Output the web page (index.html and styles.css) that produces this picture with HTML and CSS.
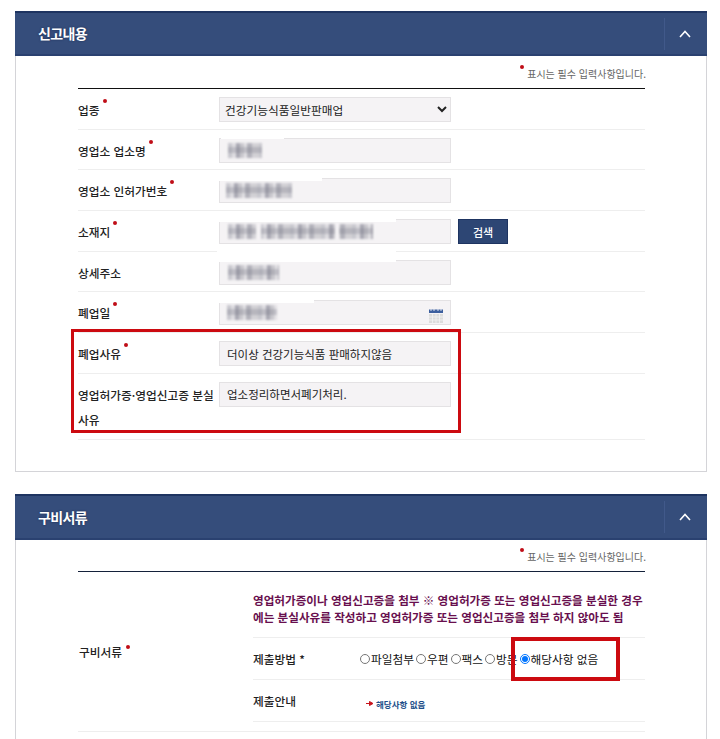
FILE: index.html
```html
<!DOCTYPE html>
<html lang="ko">
<head>
  <meta charset="UTF-8">
  <meta name="viewport" content="width=device-width, initial-scale=1.0">
  <title>폐업신고</title>
  <link rel="stylesheet" href="styles.css">
</head>
<body>
  <div class="page">
    <!-- 신고내용 -->
    <section class="panel">
      <div class="panel-head">
        <h2>신고내용</h2>
        <button class="toggle" type="button" aria-label="접기">
          <svg width="12" height="8" viewBox="0 0 12 8"><path d="M1 7l5-5.500L11 7" fill="none" stroke="#fff" stroke-width="1.6"/></svg>
        </button>
      </div>
      <div class="panel-body">
        <p class="note"><i class="req"></i>표시는 필수 입력사항입니다.</p>
        <div class="rows">
          <div class="row">
            <label class="row-label">업종<i class="req"></i></label>
            <select class="field">
              <option>건강기능식품일반판매업</option>
            </select>
          </div>
          <div class="row">
            <label class="row-label">영업소 업소명<i class="req"></i></label>
            <div class="field"><span class="smear smear-name"></span><span class="blur blur-name"></span></div>
          </div>
          <div class="row">
            <label class="row-label">영업소 인허가번호<i class="req"></i></label>
            <div class="field"><span class="smear smear-no"></span><span class="blur blur-no"></span></div>
          </div>
          <div class="row">
            <label class="row-label">소재지<i class="req"></i></label>
            <div class="field"><span class="smear smear-addr"></span><span class="blur blur-addr"></span></div>
            <button class="search" type="button">검색</button>
          </div>
          <div class="row">
            <label class="row-label">상세주소</label>
            <div class="field"><span class="smear smear-detail"></span><span class="blur blur-detail"></span></div>
          </div>
          <div class="row">
            <label class="row-label">폐업일<i class="req"></i></label>
            <div class="field field-date">
              <span class="smear smear-date"></span>
              <span class="blur blur-date"></span>
              <svg class="cal" width="14" height="15" viewBox="0 0 14 15">
                <rect y="1.500" width="14" height="3.500" fill="#3d5f9e"/>
                <path d="M2 1v2M5 1v2M9 1v2M12 1v2" stroke="#dfe5f0" stroke-width="1"/>
                <rect y="6" width="14" height="9" fill="#dcdcdc"/>
                <path d="M0 9h14M0 12h14M3.500 6v9M7 6v9M10.500 6v9" stroke="#f2f2f2" stroke-width=".8"/>
              </svg>
            </div>
          </div>
          <div class="row">
            <label class="row-label">폐업사유<i class="req"></i></label>
            <input class="field" type="text" value="더이상 건강기능식품 판매하지않음">
          </div>
          <div class="row row-tall">
            <label class="row-label">영업허가증·영업신고증 분실사유</label>
            <input class="field" type="text" value="업소정리하면서폐기처리.">
          </div>
        </div>
      </div>
    </section>

    <!-- 구비서류 -->
    <section class="panel panel-docs">
      <div class="panel-head">
        <h2>구비서류</h2>
        <button class="toggle" type="button" aria-label="접기">
          <svg width="12" height="8" viewBox="0 0 12 8"><path d="M1 7l5-5.500L11 7" fill="none" stroke="#fff" stroke-width="1.6"/></svg>
        </button>
      </div>
      <div class="panel-body">
        <p class="note"><i class="req"></i>표시는 필수 입력사항입니다.</p>
        <div class="rows docs">
          <div class="docs-label">구비서류<i class="req"></i></div>
          <div class="docs-main">
            <p class="docs-guide">영업허가증이나 영업신고증을 첨부 ※ 영업허가증 또는 영업신고증을 분실한 경우에는 분실사유를 작성하고 영업허가증 또는 영업신고증을 첨부 하지 않아도 됨</p>
            <div class="docs-row">
              <span class="docs-name">제출방법 *</span>
              <div class="radios">
                <label><input type="radio" name="submit">파일첨부</label>
                <label><input type="radio" name="submit">우편</label>
                <label><input type="radio" name="submit">팩스</label>
                <label><input type="radio" name="submit">방문</label>
                <label><input type="radio" name="submit" checked>해당사항 없음</label>
              </div>
            </div>
            <div class="docs-row">
              <span class="docs-name">제출안내</span>
              <a class="docs-link" href="#"><svg width="7" height="5" viewBox="0 0 7 5"><path d="M0 2.500h4.500M3.500 .5L7 2.500 3.500 4.500z" stroke="#c8141c" fill="#c8141c"/></svg>해당사항 없음</a>
            </div>
          </div>
        </div>
        <div class="rows-end"></div>
      </div>
    </section>

    <!-- 강조 표시 -->
    <div class="mark mark-reason"></div>
    <div class="mark mark-none"></div>
  </div>
</body>
</html>
```

FILE: styles.css
```css
:root {
  --navy: #354d7b;
  --navy-dark: #1e3461;
  --line: #eeeeee;
  --field-bg: #f5f3f5;
  --req: #c00d17;
  --mark: #cc0a10;
  --mosaic-band: linear-gradient(180deg, transparent 0 25%, rgba(120, 120, 135, .3) 25% 65%, transparent 65%);
  --mosaic: repeating-linear-gradient(90deg, #c8c8ce 0 4px, #dedde1 4px 8px, #a9a9b3 8px 12px, #c9c8cd 12px 16px, #e2e1e4 16px 19px, #b3b3bb 19px 24px, #d2d1d5 24px 31px);
}
html, body {
  margin: 0;
  padding: 0;
  background-color: #fff;
}
body {
  font-family: "Noto Sans CJK KR", "Noto Sans", sans-serif;
  font-size: 11.700px;
  color: #222;
}
.page {
  position: relative;
  height: 739px;
  box-sizing: border-box;
  padding: 11px 13px 0 15px;
  overflow: hidden;
}
.panel {
  border: 1px solid #d4d4d8;
  border-top: 0;
  height: 460px;
}
.panel-docs {
  height: 245px;
  margin-top: 22px;
  border-bottom: 0;
}
.panel-head {
  display: flex;
  align-items: center;
  justify-content: space-between;
  box-sizing: border-box;
  height: 45px;
  margin: 0 -1px;
  padding: 0 0 0 23px;
  background-color: var(--navy);
  border-top: 2px solid var(--navy-dark);
  border-bottom: 2px solid #2a4170;
}
.panel-docs .panel-head {
  height: 46px;
}
.panel-head h2 {
  margin: 0 0 1px;
  font-size: 14px;
  font-weight: 700;
  letter-spacing: -.6px;
  color: #fff;
  text-shadow: 0 0 2px rgba(20, 35, 70, .8);
}
.panel-docs .panel-head h2 {
  margin: 0;
}
.toggle {
  display: flex;
  align-items: center;
  justify-content: center;
  width: 43px;
  height: 32px;
  padding: 0 2px 0 0;
  background: none;
  border: 0;
  border-left: 1px solid #41598a;
}
.panel-body {
  padding: 0 61px 0 62px;
}
.note {
  margin: 0 -1px 0 0;
  height: 32px;
  box-sizing: border-box;
  padding-top: 9px;
  text-align: right;
  font-size: 10px;
  line-height: 15px;
  color: #666;
}
.panel-docs .note {
  height: 31px;
  padding-top: 8px;
}
.req {
  display: inline-block;
  width: 4px;
  height: 4px;
  margin-left: 3px;
  border-radius: 50%;
  background-color: var(--req);
  vertical-align: 12px;
}
.note .req {
  margin: 0 3px 0 0;
  vertical-align: 9px;
}
.rows {
  border-top: 1.5px solid #111;
}
.row {
  display: flex;
  align-items: flex-start;
  box-sizing: border-box;
  height: 40.7px;
  padding-top: 8px;
  border-bottom: 1px solid var(--line);
}
.row-label {
  flex: 0 0 141px;
  box-sizing: border-box;
  padding-right: 5px;
  font-weight: 500;
  line-height: 25px;
  color: #222;
}
.row-tall {
  height: 66px;
}
.field {
  position: relative;
  display: flex;
  align-items: center;
  box-sizing: border-box;
  width: 232px;
  height: 25px;
  padding: 0 7px;
  background-color: var(--field-bg);
  border: 1px solid #e4e2e4;
  font-family: inherit;
  font-size: 11.500px;
  color: #222;
}
select.field {
  padding: 0 0 0 1px;
  font-size: 11.700px;
}
.field-date {
  justify-content: space-between;
}
.cal {
  margin-top: 5px;
}
.blur {
  display: block;
  height: 15px;
  filter: blur(.8px);
  background-color: #e4e2e6;
  background-image: var(--mosaic-band), var(--mosaic);
}
.blur-name { width: 34px; margin-left: 1px; }
.blur-no { width: 66px; margin-left: -1px; }
.blur-addr {
  width: 145px;
  margin-left: 1px;
  background-image:
    linear-gradient(90deg, transparent 0 28px, var(--field-bg) 28px 33px, transparent 33px 107px, var(--field-bg) 107px 111px, transparent 111px),
    var(--mosaic-band), var(--mosaic);
}
.blur-detail { width: 51px; margin-left: 1px; }
.blur-date { width: 50px; }
/* 모자이크 주변 번짐 */
.smear {
  position: absolute;
  left: -3px;
  top: -3px;
  height: 5px;
  background-color: #fff;
  filter: blur(.6px);
}
.smear-name { width: 63px; height: 3px; left: 1px; }
.smear-no { width: 105px; }
.smear-addr { width: 179px; }
.smear-detail { width: 179px; top: -16px; height: 17px; }
.smear-date { width: 97px; }
.search {
  width: 50px;
  height: 25px;
  margin-left: 7px;
  padding: 0;
  background-color: #2d4674;
  border: 1px solid var(--navy-dark);
  font-family: inherit;
  font-size: 11px;
  font-weight: 500;
  color: #fff;
}
.docs {
  display: flex;
  align-items: stretch;
  border-top-color: #14213a;
}
.docs-label {
  flex: 0 0 175px;
  align-self: center;
  padding-left: 1px;
  padding-top: 8px;
  box-sizing: border-box;
  font-weight: 500;
}
.docs-label .req {
  margin-left: 4px;
  vertical-align: 8px;
}
.docs-main {
  flex: 1;
  min-width: 0;
}
.docs-guide {
  margin: 0;
  height: 66px;
  box-sizing: border-box;
  padding: 20px 0 0;
  font-size: 11.600px;
  font-weight: 700;
  line-height: 17px;
  color: #680f4e;
  border-bottom: 1px solid var(--line);
}
.docs-row {
  display: flex;
  align-items: center;
  box-sizing: border-box;
  height: 42px;
  border-bottom: 1px solid var(--line);
}
.docs-name {
  flex: 0 0 107px;
  font-weight: 500;
}
.radios {
  display: flex;
  gap: 2px;
  color: #111;
}
.radios label {
  display: flex;
  align-items: center;
}
.radios input {
  width: 10px;
  height: 10px;
  margin: 1px 1px 0 0;
}
.docs-link {
  display: flex;
  align-items: center;
  gap: 3px;
  margin: 6px 0 0 6px;
  font-size: 8.500px;
  font-weight: 700;
  color: #1d4f8a;
  text-decoration: none;
}
.rows-end {
  margin-top: 9px;
  border-top: 1px solid var(--line);
}
.mark {
  position: absolute;
  box-sizing: border-box;
  border: 3px solid var(--mark);
}
.mark-reason {
  left: 71px;
  top: 329px;
  width: 390px;
  height: 104px;
}
.mark-none {
  left: 511px;
  top: 637px;
  width: 109px;
  height: 44px;
  border-width: 4px;
}
```
